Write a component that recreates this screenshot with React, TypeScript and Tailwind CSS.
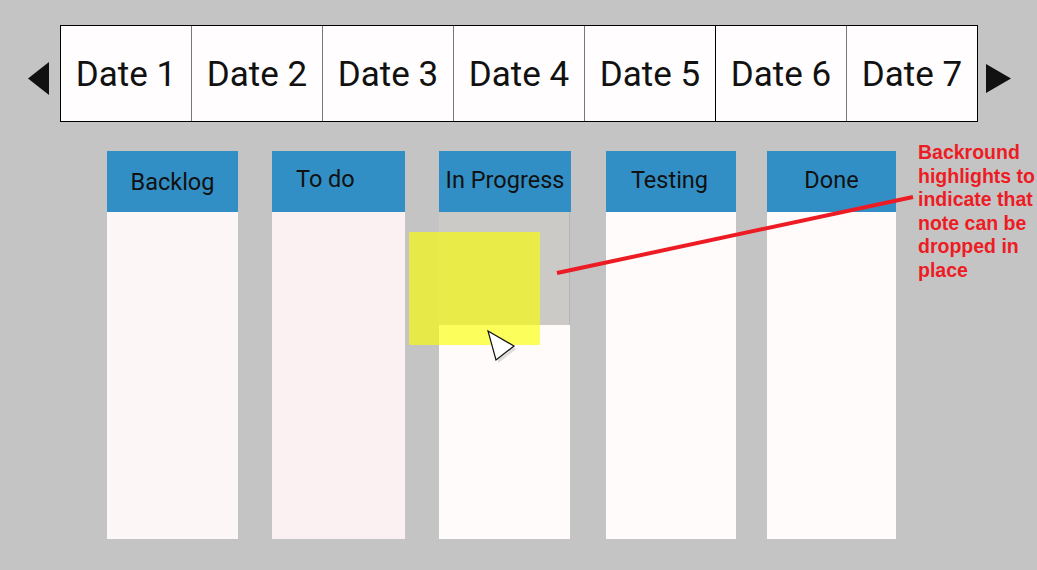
import React from 'react';

const dates = ['Date 1', 'Date 2', 'Date 3', 'Date 4', 'Date 5', 'Date 6', 'Date 7'];

const columns = [
  { title: 'Backlog', wrap: 'w-[131px]', head: 'justify-center pt-[17px]', body: 'bg-[#fdf6f6]' },
  { title: 'To do', wrap: 'w-[133px] ml-[34px]', head: 'justify-start pl-[24px] pt-[14px]', body: 'bg-[#fcf1f2]' },
  { title: 'In Progress', wrap: 'w-[132px] ml-[34px]', head: 'justify-center pt-[15px]', body: 'bg-[#fffbfa]', highlight: true },
  { title: 'Testing', wrap: 'w-[130px] ml-[35px]', head: 'justify-center pr-[3px] pt-[15px]', body: 'bg-[#fffbfa]' },
  { title: 'Done', wrap: 'w-[129px] ml-[31px]', head: 'justify-center pt-[15px]', body: 'bg-[#fffbfa]' },
];

export default function App() {
  return (
    <div className="relative w-full h-[570px] overflow-hidden bg-[#c4c4c4] font-['Roboto',sans-serif]">
      {/* date strip */}
      <div className="flex items-center pt-[25px] pl-[28px]">
        <svg width="22" height="34" viewBox="0 0 22 34" className="mt-[11px]">
          <polygon points="0,16.5 21,0 21,33" fill="#111" />
        </svg>
        <div className="flex h-[97px] ml-[10px] border border-black bg-[#fffdfd]">
          {dates.map((d, i) => (
            <div
              key={d}
              className={
                'flex items-center justify-center pt-[4px] text-[35px] text-[#111] ' +
                (i === 0
                  ? 'w-[130px]'
                  : i === 5
                  ? 'w-[131px] border-l border-black'
                  : 'w-[131px] border-l border-[#777]')
              }
            >
              {d}
            </div>
          ))}
        </div>
        <svg width="26" height="30" viewBox="0 0 26 30" className="ml-[8px] mt-[11px]">
          <polygon points="0,0 25,14.5 0,29" fill="#111" />
        </svg>
      </div>

      {/* board */}
      <div className="flex mt-[29px] pl-[107px]">
        {columns.map((c) => (
          <div key={c.title} className={'flex flex-col ' + c.wrap}>
            <div className={'flex h-[61px] bg-[#318fc5] text-[23.5px] leading-[28px] text-[#111] ' + c.head}>
              {c.title}
            </div>
            <div className={'h-[327px] ' + c.body + (c.highlight ? ' w-[131px]' : '')}>
              {c.highlight && <div className="h-[113px] bg-[#cbcac6] border-r border-[#b5b5b5]" />}
            </div>
          </div>
        ))}
      </div>

      {/* dragged note */}
      <div className="absolute left-[409px] top-[232px] w-[131px] h-[113px] bg-[rgba(250,255,0,0.63)]" />

      {/* cursor */}
      <svg className="absolute left-[484px] top-[327px]" width="40" height="40" viewBox="0 0 40 40">
        <polygon points="5,5 31,20 13,34" fill="#000" opacity="0.12" transform="translate(1.5,2)" />
        <polygon points="4,4 30,19 12,33" fill="#fff" stroke="#111" strokeWidth="1.2" strokeLinejoin="miter" />
      </svg>

      {/* annotation line */}
      <svg className="absolute left-0 top-0 pointer-events-none" width="1037" height="570">
        <line x1="557" y1="273" x2="913" y2="197" stroke="#ed1c24" strokeWidth="4" />
      </svg>

      <div className="absolute left-[918px] top-[141px] font-['Liberation_Sans',Arial,sans-serif] font-bold text-[19.5px] leading-[23.5px] text-[#ed1c24]">
        <div>Backround</div>
        <div>highlights to</div>
        <div>indicate that</div>
        <div>note can be</div>
        <div>dropped in</div>
        <div>place</div>
      </div>
    </div>
  );
}
